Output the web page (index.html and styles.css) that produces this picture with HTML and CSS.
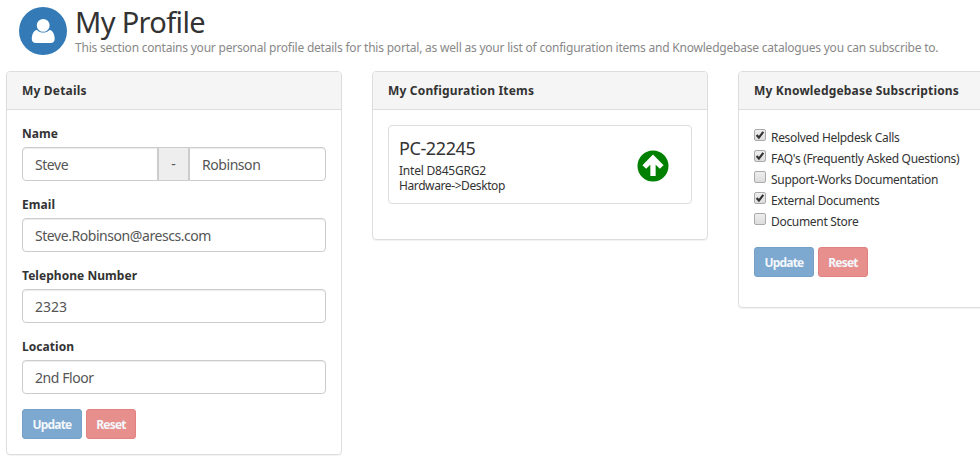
FILE: index.html
```html
<!DOCTYPE html>
<html lang="en">
<head>
<meta charset="utf-8">
<title>My Profile</title>
<link rel="stylesheet" href="styles.css">
</head>
<body>
<header class="page-header">
  <svg class="avatar" viewBox="0 0 48 48" aria-hidden="true">
    <circle cx="24" cy="24" r="24" fill="#337ab7"/>
    <path fill="#fff" d="M18 23C14.300 23.500 12.800 28 12.800 32C12.800 34.700 14.500 36 17 36H31.500C34 36 35.700 34.700 35.700 32C35.700 28 34.200 23.500 30.500 23C28.500 24.900 26.500 25.600 24.200 25.600C21.900 25.600 19.900 24.900 18 23Z"/>
    <circle cx="24.200" cy="18.400" r="6.400" fill="#fff"/>
  </svg>
  <div class="page-heading">
    <h1 class="page-title">My Profile</h1>
    <p class="page-intro">This section contains your personal profile details for this portal, as well as your list of configuration items and Knowledgebase catalogues you can subscribe to.</p>
  </div>
</header>
<main class="panels">
  <section class="panel">
    <h2 class="panel-heading">My Details</h2>
    <form class="panel-body">
      <div class="field">
        <label class="label" for="first">Name</label>
        <div class="input-group">
          <input class="input input-first" id="first" value="Steve">
          <span class="addon">-</span>
          <input class="input input-last" value="Robinson" aria-label="Last name">
        </div>
      </div>
      <div class="field">
        <label class="label" for="email">Email</label>
        <input class="input" id="email" value="Steve.Robinson@arescs.com">
      </div>
      <div class="field">
        <label class="label" for="phone">Telephone Number</label>
        <input class="input input-number" id="phone" value="2323">
      </div>
      <div class="field">
        <label class="label" for="location">Location</label>
        <input class="input" id="location" value="2nd Floor">
      </div>
      <div class="actions">
        <button class="btn btn-update" type="button">Update</button>
        <button class="btn btn-reset" type="button">Reset</button>
      </div>
    </form>
  </section>
  <section class="panel">
    <h2 class="panel-heading">My Configuration Items</h2>
    <div class="panel-body panel-body-items">
      <article class="item">
        <div>
          <h3 class="item-name">PC-22245</h3>
          <p class="item-line item-model">Intel D845GRG2</p>
          <p class="item-line">Hardware-&gt;Desktop</p>
        </div>
        <svg class="item-status" viewBox="0 0 32 32" aria-hidden="true">
          <circle cx="16" cy="16" r="15.500" fill="green"/>
          <path d="M16 26V9M7.300 17L16 8.300L24.700 17" fill="none" stroke="#fff" stroke-width="5.300"/>
        </svg>
      </article>
    </div>
  </section>
  <section class="panel">
    <h2 class="panel-heading">My Knowledgebase Subscriptions</h2>
    <form class="panel-body panel-body-subs">
      <ul class="subs">
        <li class="sub"><span class="check"><svg class="tick" viewBox="0 0 12 12"><path d="M2.600 6L4.900 8.600L9.300 2.800"/></svg></span>Resolved Helpdesk Calls</li>
        <li class="sub"><span class="check"><svg class="tick" viewBox="0 0 12 12"><path d="M2.600 6L4.900 8.600L9.300 2.800"/></svg></span>FAQ's (Frequently Asked Questions)</li>
        <li class="sub"><span class="check"></span>Support-Works Documentation</li>
        <li class="sub"><span class="check"><svg class="tick" viewBox="0 0 12 12"><path d="M2.600 6L4.900 8.600L9.300 2.800"/></svg></span>External Documents</li>
        <li class="sub"><span class="check"></span>Document Store</li>
      </ul>
      <div class="actions">
        <button class="btn btn-update" type="button">Update</button>
        <button class="btn btn-reset" type="button">Reset</button>
      </div>
    </form>
  </section>
</main>
</body>
</html>
```
FILE: styles.css
```css
* { box-sizing: border-box; }
body {
  margin: 0;
  height: 464px;
  overflow: hidden;
  background: #fff;
  color: #333;
  font: 12px/15px Tahoma, "Noto Sans", sans-serif;
}
h1, h2, h3, p, ul { margin: 0; padding: 0; font-weight: normal; }
.page-header { display: flex; gap: 8px; height: 71px; padding: 7px 0 0 19px; }
.avatar { width: 48px; height: 48px; flex: none; }
.page-heading { white-space: nowrap; }
.page-title { height: 33px; font-size: 29px; line-height: 29px; letter-spacing: -.65px; }
.page-intro { color: #888; line-height: 15px; letter-spacing: -.215px; }
.panels { display: grid; grid-template-columns: repeat(3, 336px); gap: 30px; padding-left: 6px; align-items: start; }
.panel { border: 1px solid #ddd; border-radius: 4px; box-shadow: 0 1px 1px rgba(0, 0, 0, .05); }
.panel-heading {
  height: 38px;
  padding: 0 15px;
  border-bottom: 1px solid #ddd;
  border-radius: 3px 3px 0 0;
  background: #f5f5f5;
  font-size: 12px;
  font-weight: bold;
  line-height: 37px;
  letter-spacing: .18px;
  white-space: nowrap;
}
.panel-body { padding: 15px; }
.field { margin-bottom: 15px; }
.label { display: block; height: 17px; margin-bottom: 5px; font-weight: bold; line-height: 17px; letter-spacing: .05px; }
.input {
  display: block;
  width: 100%;
  height: 34px;
  padding: 0 12px;
  border: 1px solid #ccc;
  border-radius: 4px;
  background: #fff;
  box-shadow: inset 0 1px 1px rgba(0, 0, 0, .075);
  color: #555;
  font: 14px/20px Tahoma, "Noto Sans", sans-serif;
  letter-spacing: -.44px;
}
.input-number { letter-spacing: 0; }
.input-group { display: flex; }
.input-first { width: 136px; border-radius: 4px 0 0 4px; }
.input-last { width: 137px; border-radius: 0 4px 4px 0; }
.addon { width: 31px; border: 1px solid #ccc; background: #eee; color: #555; line-height: 31px; text-align: center; font-size: 14px; }
.actions { display: flex; gap: 4px; }
.btn {
  height: 30px;
  padding: 1px 0 0;
  border: 1px solid;
  border-radius: 3px;
  color: #f3f7fb;
  font: bold 12px/18px Tahoma, "Noto Sans", sans-serif;
  letter-spacing: -.8px;
}
.btn-update { width: 60px; border-color: #75a0c8; background: #7da8d0; }
.btn-reset { width: 50px; border-color: #e38080; background: #e78f8d; }
.panel-body-items { height: 129px; }
.item { display: flex; justify-content: space-between; height: 79px; padding: 10px 22px 0 10px; border: 1px solid #ddd; border-radius: 4px; }
.item-name { margin: 2px 0 5px; font-size: 18px; line-height: 20px; letter-spacing: -.4px; }
.item-line { letter-spacing: -.4px; }
.item-model { letter-spacing: -.22px; }
.item-status { width: 32px; height: 32px; margin-top: 14px; }
.panel-body-subs { height: 197px; }
.subs { height: 122px; list-style: none; }
.sub { display: flex; gap: 5px; height: 21px; line-height: 25px; letter-spacing: -.31px; white-space: nowrap; }
.check { width: 12px; height: 12px; margin-top: 4px; border: 1px solid #aaa; border-radius: 2px; background: linear-gradient(#eee, #ddd); }
.tick { display: block; width: 12px; height: 12px; margin: -1px; fill: none; stroke: #333; stroke-width: 2.2; }
```
